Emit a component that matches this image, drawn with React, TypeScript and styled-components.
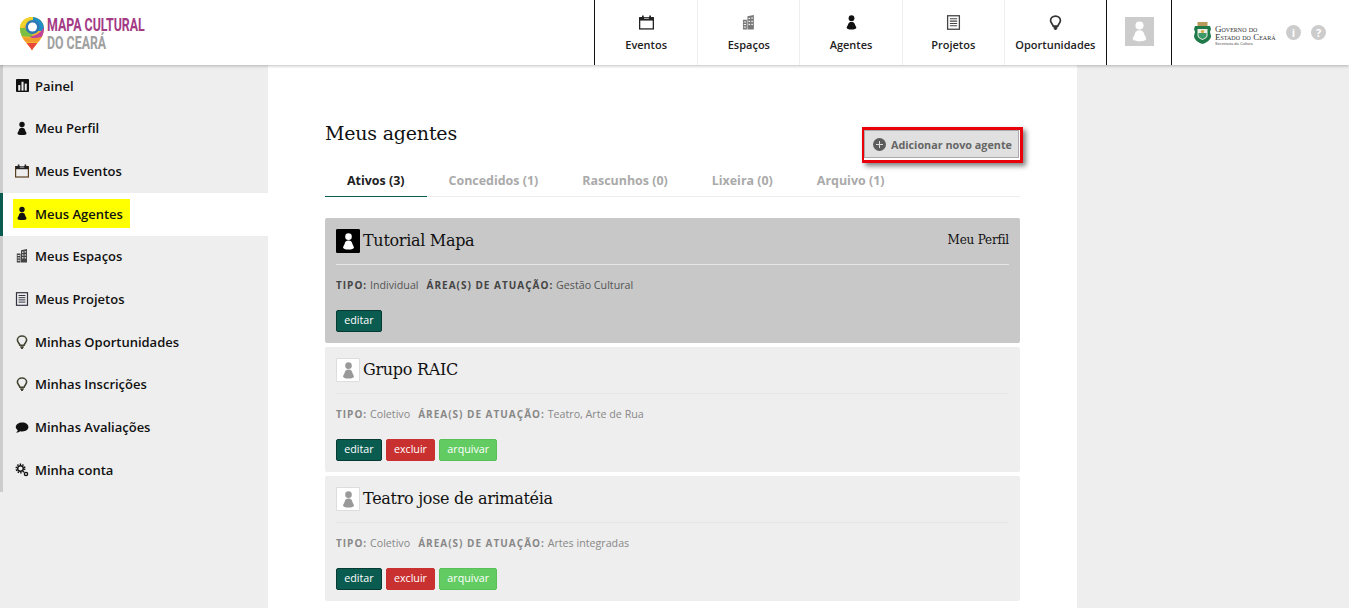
import React from 'react';
import styled, { createGlobalStyle } from 'styled-components';

const GlobalStyle = createGlobalStyle`
    html, body {
        margin: 0;
        padding: 0;
        background: #fff;
        overflow: hidden;
    }
    * { box-sizing: border-box; }
    body {
        font-family: "Open Sans", "Noto Sans", sans-serif;
        color: #111;
    }
`;

const SERIF = '"DejaVu Serif", "Liberation Serif", serif';

type IconProps = { size?: number };

const PersonIcon = ({ size = 14 }: IconProps) => (
    <svg width={size} height={size} viewBox='0 0 14 14' fill='currentColor'>
        <circle cx='7' cy='3' r='2.700' />
        <path d='M7 6.200c-2 0-3 1.200-3.300 3-.3 1-1.200 1.700-1.200 2.700 0 1 1.800 1.700 4.500 1.700s4.500-.7 4.500-1.700c0-1-.9-1.700-1.200-2.700-.3-1.800-1.300-3-3.300-3z' />
    </svg>
);

const CalendarIcon = ({ size = 14 }: IconProps) => (
    <svg width={size} height={size} viewBox='0 0 14 14' fill='none'>
        <rect x='0.600' y='2.600' width='12.800' height='10.400' stroke='currentColor' strokeWidth='1.200' />
        <rect x='0.600' y='2' width='12.800' height='3.200' fill='#222' />
        <rect x='2.800' y='0.500' width='1.600' height='2.400' fill='#222' />
        <rect x='9.600' y='0.500' width='1.600' height='2.400' fill='#222' />
        <rect x='4.800' y='2.600' width='4.400' height='1' fill='#bbb' />
    </svg>
);

const BuildingIcon = ({ size = 14 }: IconProps) => (
    <svg width={size} height={size} viewBox='0 0 14 14' fill='currentColor'>
        <path d='M1.800 4.500h3.700v9H1.800zM6 1.200l6-1.200v13.500H6z' />
        <g fill='#eee'>
            <rect x='2.600' y='6' width='2.100' height='1' />
            <rect x='2.600' y='8.400' width='2.100' height='1' />
            <rect x='2.600' y='10.800' width='2.100' height='1' />
            <rect x='7' y='2.600' width='1.500' height='1.200' />
            <rect x='9.600' y='2.200' width='1.500' height='1.200' />
            <rect x='7' y='5.400' width='1.500' height='1.200' />
            <rect x='9.600' y='5.400' width='1.500' height='1.200' />
            <rect x='7' y='8.200' width='1.500' height='1.200' />
            <rect x='9.600' y='8.200' width='1.500' height='1.200' />
        </g>
    </svg>
);

const ProjectIcon = ({ size = 14 }: IconProps) => (
    <svg width={size} height={size} viewBox='0 0 14 14' fill='none' stroke='currentColor'>
        <rect x='1.500' y='0.700' width='11' height='12.600' strokeWidth='1.200' />
        <path d='M3.600 3.500h6.800M3.600 5.700h6.800M3.600 7.900h6.800M3.600 10.100h6.800' strokeWidth='1' />
    </svg>
);

const BulbIcon = ({ size = 14 }: IconProps) => (
    <svg width={size} height={size} viewBox='0 0 14 14' fill='none' stroke='currentColor' strokeWidth='1.600'>
        <path d='M7 1C4.300 1 2.400 2.900 2.400 5.100c0 2.200 2 3.200 2.500 5.200h4.200c.5-2 2.500-3 2.500-5.200C11.600 2.900 9.700 1 7 1z' />
        <path d='M5.200 12h3.600M6 13.400h2' />
    </svg>
);

const ChartIcon = ({ size = 14 }: IconProps) => (
    <svg width={size} height={size} viewBox='0 0 14 14'>
        <rect width='14' height='14' rx='1' fill='#111' />
        <rect x='2.400' y='6.500' width='2.200' height='6' fill='#eee' />
        <rect x='5.900' y='3' width='2.200' height='9.500' fill='#eee' />
        <rect x='9.400' y='5' width='2.200' height='7.500' fill='#eee' />
    </svg>
);

const ChatIcon = ({ size = 14 }: IconProps) => (
    <svg width={size} height={size} viewBox='0 0 14 14' fill='currentColor'>
        <path d='M7.400 2C3.700 2 .8 4 .8 6.500c0 1.300.8 2.400 2 3.200-.2 1-.8 1.800-1.800 2.400 1.800 0 3.200-.6 4.200-1.400.7.1 1.400.2 2.200.2 3.400 0 6-1.900 6-4.400S10.800 2 7.400 2z' />
    </svg>
);

const GearsIcon = ({ size = 14 }: IconProps) => (
    <svg width={size} height={size} viewBox='0 0 14 14' fill='none' stroke='currentColor'>
        <circle cx='5.500' cy='5.500' r='2.800' strokeWidth='1.400' />
        <circle cx='5.500' cy='5.500' r='4.300' strokeWidth='1.400' strokeDasharray='1.500 1.200' />
        <circle cx='11' cy='11' r='1.600' strokeWidth='1.400' />
    </svg>
);

const LogoPin = () => (
    <svg width='24' height='34' viewBox='0 0 24 34'>
        <defs>
            <clipPath id='pin'>
                <path d='M12 33.500C10 28.500 0 22 0 11.500 0 5 5.300 0 12 0s12 5 12 11.500C24 22 14 28.500 12 33.500z' />
            </clipPath>
        </defs>
        <g clipPath='url(#pin)'>
            <rect width='24' height='34' fill='#f7b52c' />
            <rect x='12' width='12' height='14' fill='#1d8fc4' />
            <path d='M0 0h13v5C7 6 3 9 2 13H0z' fill='#f2d32a' />
            <path d='M0 11h5c2 3 5 5 8 5l-1 4-12-1z' fill='#7cc043' />
            <path d='M24 10v9c-4 3-10 3-15 1 6-1 12-4 15-10z' fill='#c2419a' />
            <path d='M0 19c7 3 15 3 24 0v6H0z' fill='#f39a2d' />
            <path d='M0 26h24v8H0z' fill='#e8483c' />
        </g>
        <circle cx='12.500' cy='10' r='7' fill='#2d78b4' />
        <circle cx='12.500' cy='10' r='4.500' fill='#fff' />
    </svg>
);

const Crest = () => (
    <svg width='17' height='22' viewBox='0 0 17 22'>
        <rect x='3.500' y='0' width='10' height='4.500' fill='#b89a5a' />
        <path d='M1 4h15l1 3-1 3 1 4c0 4-5 7-8.500 8C5 21 0 18 0 14l1-4-1-3z' fill='#1f7a4a' />
        <path d='M3.500 7h10v6.500c0 2-3 3.500-5 4.500-2-1-5-2.500-5-4.500z' fill='#f0eee2' />
        <path d='M4.500 11h8v3c0 1-2.500 2.500-4 3-1.500-.5-4-2-4-3z' fill='#3a9a6a' />
        <circle cx='8.500' cy='9.500' r='1.600' fill='#d8a63c' />
    </svg>
);

const Header = styled.header`
    position: relative;
    z-index: 2;
    display: flex;
    justify-content: space-between;
    height: 65px;
    background: #fff;
    box-shadow: 0 1px 3px rgba(0, 0, 0, 0.25);
`;

const Brand = styled.div`
    display: flex;
    align-items: center;
    gap: 3px;
    padding: 2px 0 0 20px;
`;

const BrandText = styled.div`
    display: flex;
    flex-direction: column;
    gap: 2px;
    width: 100px;
`;

const BrandLine = styled.span<{ $muted?: boolean }>`
    font-family: Roboto, "Liberation Sans", sans-serif;
    font-weight: 700;
    font-size: 19px;
    line-height: 16px;
    white-space: nowrap;
    transform: scaleX(0.65);
    transform-origin: left center;
    color: ${(p) => (p.$muted ? '#a0a0a0' : '#a43a85')};
`;

const HeaderRight = styled.div`
    display: flex;
    align-items: stretch;
`;

const TopNav = styled.nav`
    display: flex;
    border-left: 1px solid #111;
    border-right: 1px solid #111;
`;

const TopNavItem = styled.a<{ $first?: boolean }>`
    display: flex;
    flex-direction: column;
    align-items: center;
    width: 102.200px;
    padding-top: 15px;
    gap: 7px;
    font-size: 11px;
    font-weight: 600;
    line-height: 15px;
    color: #222;
    border-left: ${(p) => (p.$first ? 'none' : '1px solid #eee')};
`;

const TopIcon = styled.span<{ $tone?: string }>`
    display: flex;
    height: 15px;
    color: ${(p) => p.$tone ?? '#333'};
`;

const AvatarSlot = styled.div`
    display: flex;
    align-items: center;
    justify-content: center;
    width: 65px;
    padding-bottom: 2px;
    border-right: 1px solid #111;
`;

const AvatarBox = styled.div`
    display: flex;
    align-items: center;
    justify-content: center;
    width: 29px;
    height: 29px;
    background: #ccc;
    color: #fff;
`;

const GovSlot = styled.div`
    display: flex;
    align-items: center;
    width: 177px;
    padding-left: 22px;
`;

const GovText = styled.div`
    display: flex;
    flex-direction: column;
    margin: 7px 0 0 4px;
    width: 61px;
    font-family: "Liberation Serif", serif;
    font-variant: small-caps;
    font-size: 9px;
    line-height: 8px;
    color: #333;
    white-space: nowrap;
`;

const GovSmall = styled.span`
    font-family: "Liberation Sans", sans-serif;
    font-variant: normal;
    font-size: 4px;
    line-height: 6px;
    color: #555;
`;

const HelpDot = styled.span`
    display: flex;
    align-items: center;
    justify-content: center;
    width: 15px;
    height: 15px;
    margin-left: 10px;
    border-radius: 50%;
    background: #ccc;
    color: #fff;
    font-size: 11px;
    font-weight: 700;
`;

const Layout = styled.div`
    display: grid;
    grid-template-columns: 268px 809px 1fr;
    min-height: 543px;
    height: 543px;
    overflow: hidden;
`;

const Sidebar = styled.aside`
    background: #eee;
`;

const SideItem = styled.a<{ $active?: boolean }>`
    display: flex;
    align-items: center;
    height: 42.670px;
    padding-left: 10px;
    border-left: 3px solid ${(p) => (p.$active ? '#0a5c50' : '#ccc')};
    background: ${(p) => (p.$active ? '#fff' : 'transparent')};
    font-size: 13px;
    font-weight: 600;
    color: #111;
`;

const SideLabel = styled.span<{ $active?: boolean }>`
    display: flex;
    align-items: center;
    gap: 6px;
    height: 29px;
    margin-bottom: 1px;
    padding: 0 7px 0 2px;
    background: ${(p) => (p.$active ? '#ff0' : 'transparent')};
`;

const SideIcon = styled.span<{ $tone?: string }>`
    display: flex;
    justify-content: center;
    width: 14px;
    color: ${(p) => p.$tone ?? '#111'};
`;

const Main = styled.main`
    padding: 55px 57px 0;
    background: #fff;
`;

const TitleRow = styled.div`
    display: flex;
    justify-content: space-between;
    height: 51px;
`;

const PageTitle = styled.h1`
    margin: 0;
    font-family: ${SERIF};
    font-weight: 400;
    font-size: 19px;
    line-height: 26px;
    letter-spacing: -0.200px;
    color: #111;
`;

const AddHighlight = styled.div`
    align-self: flex-start;
    margin: 7px -3px 0 0;
    padding: 0 1px 2px 0;
    border: 3px solid #e8000b;
    border-left-width: 2px;
    box-shadow: 3px 3px 5px rgba(0, 0, 0, 0.5);
`;

const AddButton = styled.button`
    display: flex;
    align-items: center;
    gap: 5px;
    height: 28px;
    padding: 0 6px 0 8px;
    border: 1px solid #aaa;
    background: #e0e0e0;
    font-family: inherit;
    font-size: 10.800px;
    font-weight: 700;
    color: #666;
`;

const PlusDot = styled.span`
    position: relative;
    display: block;
    width: 13px;
    height: 13px;
    border-radius: 50%;
    background: #5c5c5c;
    &::before, &::after {
        content: '';
        position: absolute;
        background: #ddd;
    }
    &::before { left: 3px; right: 3px; top: 6px; height: 1px; }
    &::after { top: 3px; bottom: 3px; left: 6px; width: 1px; }
`;

const Tabs = styled.div`
    display: flex;
    border-bottom: 1px solid #eee;
    height: 27px;
    margin-top: -1px;
    margin-bottom: 21px;
`;

const Tab = styled.a<{ $active?: boolean }>`
    padding: 0 22px;
    height: 27px;
    margin-bottom: -1px;
    font-size: 12.450px;
    font-weight: 700;
    line-height: 21px;
    color: ${(p) => (p.$active ? '#222' : '#aaa')};
    border-bottom: 1px solid ${(p) => (p.$active ? '#0a5c50' : 'transparent')};
    white-space: nowrap;
`;

const CardList = styled.div`
    display: flex;
    flex-direction: column;
    gap: 4.500px;
`;

const Card = styled.article<{ $selected?: boolean }>`
    height: 124.500px;
    padding: 11px 11px 0;
    border-radius: 2px;
    background: ${(p) => (p.$selected ? '#c8c8c8' : '#eee')};
`;

const CardHead = styled.div`
    display: flex;
    align-items: center;
    justify-content: space-between;
    height: 24px;
    margin-bottom: 11px;
`;

const CardTitle = styled.h2`
    display: flex;
    align-items: center;
    gap: 3px;
    margin: 0;
    padding-bottom: 2px;
    font-family: ${SERIF};
    font-weight: 400;
    font-size: 16px;
    letter-spacing: -0.300px;
    color: #111;
`;

const CardAvatar = styled.span<{ $dark?: boolean }>`
    display: flex;
    align-items: center;
    justify-content: center;
    width: 24px;
    height: 24px;
    margin-bottom: -2px;
    border-radius: 1px;
    border: 1px solid ${(p) => (p.$dark ? '#000' : '#ddd')};
    background: ${(p) => (p.$dark ? '#000' : '#fff')};
    color: ${(p) => (p.$dark ? '#fff' : '#999')};
`;

const ProfileLink = styled.span`
    margin-bottom: 2px;
    font-family: ${SERIF};
    font-size: 12px;
    letter-spacing: -0.200px;
    color: #111;
`;

const Divider = styled.hr`
    height: 1px;
    margin: 0 0 13px;
    border: none;
    background: #e6e6e6;
`;

const Meta = styled.p<{ $selected?: boolean }>`
    margin: 0 0 17px;
    height: 15px;
    font-size: 10.700px;
    line-height: 15px;
    color: ${(p) => (p.$selected ? '#555' : '#888')};
    white-space: nowrap;
`;

const MetaLabel = styled.b<{ $selected?: boolean }>`
    font-size: 10px;
    font-weight: 700;
    letter-spacing: 1px;
    color: ${(p) => (p.$selected ? '#444' : '#888')};
    &:nth-of-type(2) { margin-left: 8px; }
`;

const Actions = styled.div`
    display: flex;
    gap: 4px;
`;

const ActionButton = styled.button<{ $bg: string; $edge: string }>`
    height: 22px;
    padding: 0 7.200px 2px;
    border: 1px solid ${(p) => p.$edge};
    border-radius: 2px;
    background: ${(p) => p.$bg};
    color: #fff;
    font-family: inherit;
    font-size: 10.700px;
    line-height: 16px;
`;

const EditButton = () => <ActionButton $bg='#0a5c50' $edge='#063a33'>editar</ActionButton>;
const DeleteButton = () => <ActionButton $bg='#c93030' $edge='#c93030'>excluir</ActionButton>;
const ArchiveButton = () => <ActionButton $bg='#62cc62' $edge='#58c058'>arquivar</ActionButton>;

const Aside = styled.div`
    background: #eee;
`;

const topLinks = [
    { label: 'Eventos', icon: <CalendarIcon size={15} />, tone: '#222' },
    { label: 'Espaços', icon: <BuildingIcon size={15} />, tone: '#777' },
    { label: 'Agentes', icon: <PersonIcon size={15} />, tone: '#111' },
    { label: 'Projetos', icon: <ProjectIcon size={15} />, tone: '#444' },
    { label: 'Oportunidades', icon: <BulbIcon size={15} />, tone: '#333' },
];

const sideLinks = [
    { label: 'Painel', icon: <ChartIcon size={13} /> },
    { label: 'Meu Perfil', icon: <PersonIcon size={15} /> },
    { label: 'Meus Eventos', icon: <CalendarIcon size={14} />, tone: '#5a4020' },
    { label: 'Meus Agentes', icon: <PersonIcon size={15} />, active: true },
    { label: 'Meus Espaços', icon: <BuildingIcon size={14} />, tone: '#444' },
    { label: 'Meus Projetos', icon: <ProjectIcon size={14} />, tone: '#334' },
    { label: 'Minhas Oportunidades', icon: <BulbIcon size={14} />, tone: '#443' },
    { label: 'Minhas Inscrições', icon: <BulbIcon size={14} />, tone: '#443' },
    { label: 'Minhas Avaliações', icon: <ChatIcon size={15} /> },
    { label: 'Minha conta', icon: <GearsIcon size={14} /> },
];

const tabs = ['Ativos (3)', 'Concedidos (1)', 'Rascunhos (0)', 'Lixeira (0)', 'Arquivo (1)'];

const agents = [
    { name: 'Tutorial Mapa', type: 'Individual', area: 'Gestão Cultural', selected: true },
    { name: 'Grupo RAIC', type: 'Coletivo', area: 'Teatro, Arte de Rua' },
    { name: 'Teatro jose de arimatéia', type: 'Coletivo', area: 'Artes integradas' },
];

export default function App(): JSX.Element {
    return (
        <>
            <GlobalStyle />
            <Header>
                <Brand>
                    <LogoPin />
                    <BrandText>
                        <BrandLine>MAPA CULTURAL</BrandLine>
                        <BrandLine $muted>DO CEARÁ</BrandLine>
                    </BrandText>
                </Brand>
                <HeaderRight>
                    <TopNav>
                        {topLinks.map((link, index) => (
                            <TopNavItem key={link.label} $first={index === 0}>
                                <TopIcon $tone={link.tone}>{link.icon}</TopIcon>
                                {link.label}
                            </TopNavItem>
                        ))}
                    </TopNav>
                    <AvatarSlot>
                        <AvatarBox><PersonIcon size={21} /></AvatarBox>
                    </AvatarSlot>
                    <GovSlot>
                        <Crest />
                        <GovText>
                            <span>Governo do</span>
                            <span>Estado do Ceará</span>
                            <GovSmall>Secretaria da Cultura</GovSmall>
                        </GovText>
                        <HelpDot>i</HelpDot>
                        <HelpDot>?</HelpDot>
                    </GovSlot>
                </HeaderRight>
            </Header>
            <Layout>
                <Sidebar>
                    {sideLinks.map((link) => (
                        <SideItem key={link.label} $active={link.active}>
                            <SideLabel $active={link.active}>
                                <SideIcon $tone={link.tone}>{link.icon}</SideIcon>
                                {link.label}
                            </SideLabel>
                        </SideItem>
                    ))}
                </Sidebar>
                <Main>
                    <TitleRow>
                        <PageTitle>Meus agentes</PageTitle>
                        <AddHighlight>
                            <AddButton>
                                <PlusDot />
                                Adicionar novo agente
                            </AddButton>
                        </AddHighlight>
                    </TitleRow>
                    <Tabs>
                        {tabs.map((tab, index) => (
                            <Tab key={tab} $active={index === 0}>{tab}</Tab>
                        ))}
                    </Tabs>
                    <CardList>
                        {agents.map((agent) => (
                            <Card key={agent.name} $selected={agent.selected}>
                                <CardHead>
                                    <CardTitle>
                                        <CardAvatar $dark={agent.selected}><PersonIcon size={17} /></CardAvatar>
                                        {agent.name}
                                    </CardTitle>
                                    {agent.selected && <ProfileLink>Meu Perfil</ProfileLink>}
                                </CardHead>
                                <Divider />
                                <Meta $selected={agent.selected}>
                                    <MetaLabel $selected={agent.selected}>TIPO:</MetaLabel> {agent.type}
                                    <MetaLabel $selected={agent.selected}>ÁREA(S) DE ATUAÇÃO:</MetaLabel> {agent.area}
                                </Meta>
                                <Actions>
                                    <EditButton />
                                    {!agent.selected && <DeleteButton />}
                                    {!agent.selected && <ArchiveButton />}
                                </Actions>
                            </Card>
                        ))}
                    </CardList>
                </Main>
                <Aside />
            </Layout>
        </>
    );
}
